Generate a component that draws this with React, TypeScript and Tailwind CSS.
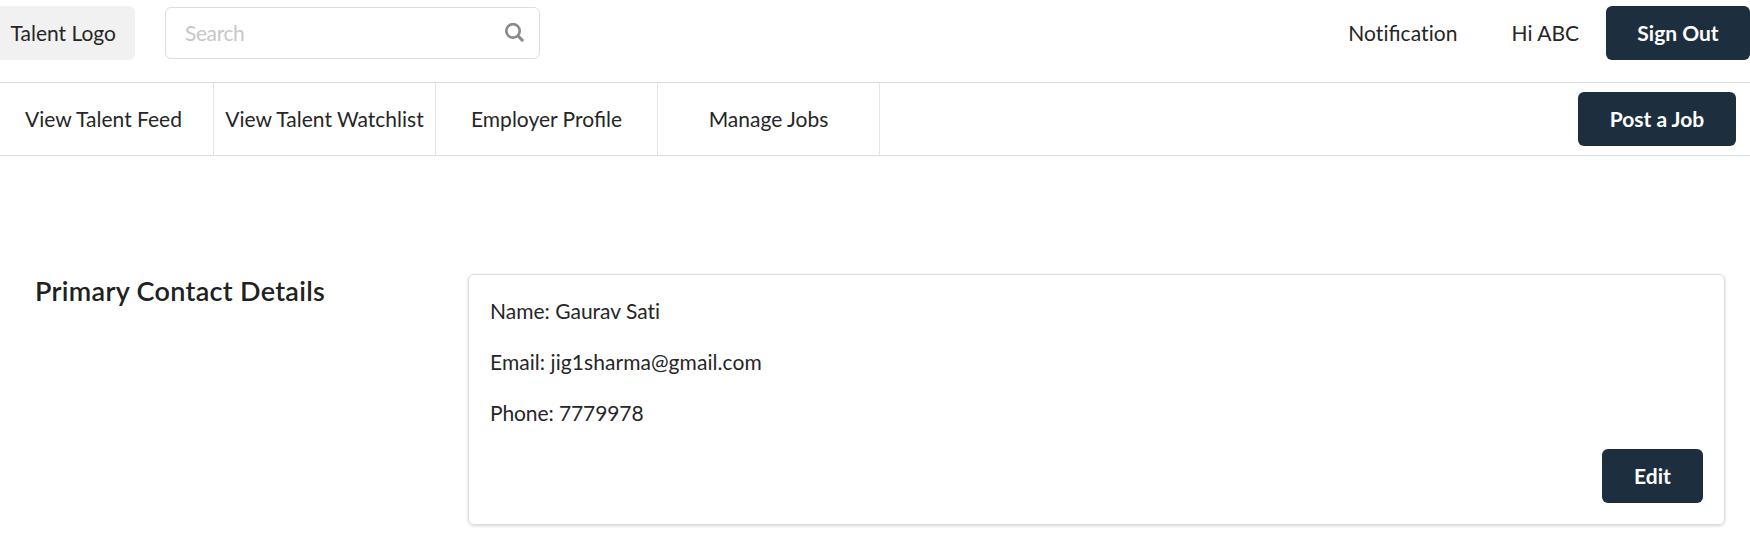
import React from "react";

const navItems = [
  { label: "View Talent Feed", width: "w-[214px] pr-[6px]" },
  { label: "View Talent Watchlist", width: "w-[222px]" },
  { label: "Employer Profile", width: "w-[222px]" },
  { label: "Manage Jobs", width: "w-[222px]" },
];

const contact = [
  { label: "Name", value: "Gaurav Sati", style: "" },
  { label: "Email", value: "jig1sharma@gmail.com", style: "tracking-[0.06px]" },
  { label: "Phone", value: "7779978", style: "tracking-[-0.1px]" },
];

function DarkButton({ children, className }: { children: React.ReactNode; className: string }) {
  return (
    <button
      type="button"
      className={`flex h-[54px] shrink-0 items-center justify-center rounded-[6px] bg-[#1d2e3e] font-bold text-white ${className}`}
    >
      {children}
    </button>
  );
}

function SearchIcon() {
  return (
    <svg viewBox="0 0 19 19" className="-mt-px size-[19px] text-[#8b8b8b]" fill="none" stroke="currentColor" strokeLinecap="round">
      <circle cx="8" cy="7.9" r="6.7" strokeWidth="2.7" />
      <path d="M13 12.9l4.2 4.2" strokeWidth="3" />
    </svg>
  );
}

export default function App() {
  return (
    <div className="h-[547px] w-full overflow-hidden bg-white font-['Lato',sans-serif] text-[21px] leading-[30px] text-[#262626]">
      <header className="flex h-[82px] items-start pt-[6px]">
        <div className="flex h-[54px] w-[135px] items-center rounded-r-[6px] bg-[#f1f1f1] pl-[10.5px]">Talent Logo</div>
        <div className="mt-px ml-[30px] flex h-[52px] w-[375px] items-center justify-between rounded-[6px] border border-[#dededf] pr-[15px] pl-[19px]">
          <input
            type="text"
            placeholder="Search"
            className="-mt-px w-[300px] bg-transparent tracking-[-0.4px] outline-none placeholder:text-[#c7c7c7]"
          />
          <SearchIcon />
        </div>
        <div className="ml-auto flex h-[54px] items-center">
          <span className="mr-[54px] tracking-[0.08px] [font-variant-ligatures:none]">
            Noti<span className="tracking-normal [font-variant-ligatures:normal]">fi</span>cation
          </span>
          <span className="mr-[27px]">Hi ABC</span>
          <DarkButton className="w-[144px]">Sign Out</DarkButton>
        </div>
      </header>
      <nav className="flex h-[74px] items-stretch border-y border-[#d9dcdd]">
        {navItems.map((item) => (
          <a
            key={item.label}
            className={`flex shrink-0 items-center justify-center border-r border-[#e4e4e5] whitespace-nowrap ${item.width}`}
          >
            {item.label}
          </a>
        ))}
        <div className="mr-[14px] ml-auto flex items-center">
          <DarkButton className="w-[158px]">Post a Job</DarkButton>
        </div>
      </nav>
      <main className="flex pt-[118px] pr-[25px] pl-[35px]">
        <h3 className="-mt-px w-[433px] text-[27px] leading-[35px] font-semibold tracking-[0.31px] text-[#212121]">Primary Contact Details</h3>
        <section className="flex h-[251px] flex-1 flex-col rounded-[6px] border border-[#dededf] px-[21px] pt-[21px] shadow-[0_1px_3px_0_#d4d4d5]">
          <div className="flex flex-col gap-[21px] [font-variant-ligatures:none]">
            {contact.map((row) => (
              <p key={row.label} className={row.style}>
                {row.label}: {row.value}
              </p>
            ))}
          </div>
          <div className="mt-[21px] flex justify-end">
            <DarkButton className="w-[101px]">Edit</DarkButton>
          </div>
        </section>
      </main>
    </div>
  );
}
